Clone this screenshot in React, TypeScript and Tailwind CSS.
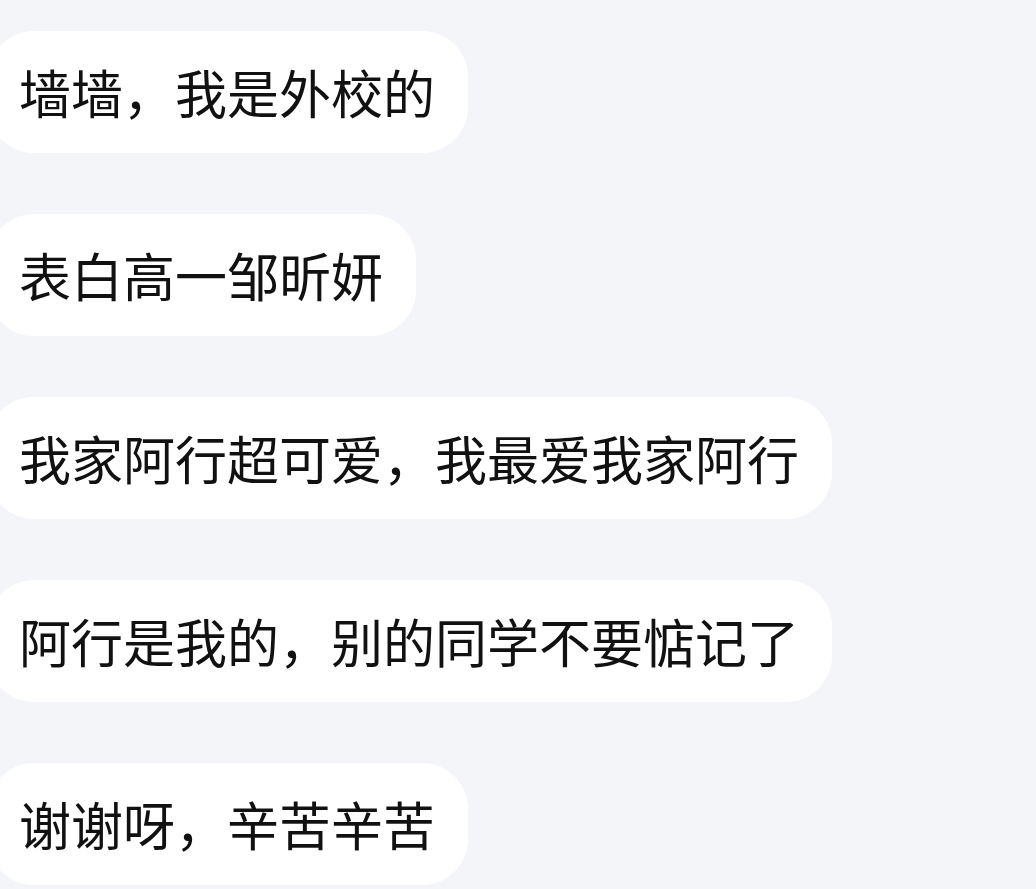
const messages = [
  "墙墙，我是外校的",
  "表白高一邹昕妍",
  "我家阿行超可爱，我最爱我家阿行",
  "阿行是我的，别的同学不要惦记了",
  "谢谢呀，辛苦辛苦",
]

export default function App() {
  return (
    <div
      className="w-[1036px] h-[889px] overflow-hidden bg-[#f4f5f9] pt-[31px]"
      style={{ fontFamily: '"Noto Sans CJK SC", "Noto Sans", sans-serif' }}
    >
      <div className="flex flex-col items-start gap-[61px]">
        {messages.map((msg) => (
          <div
            key={msg}
            className="-ml-[12px] bg-white rounded-[46px] pl-[31px] pr-[33px] py-[35px] text-[52px] leading-[52px] text-[#111111] whitespace-nowrap"
          >
            {msg}
          </div>
        ))}
      </div>
    </div>
  )
}
